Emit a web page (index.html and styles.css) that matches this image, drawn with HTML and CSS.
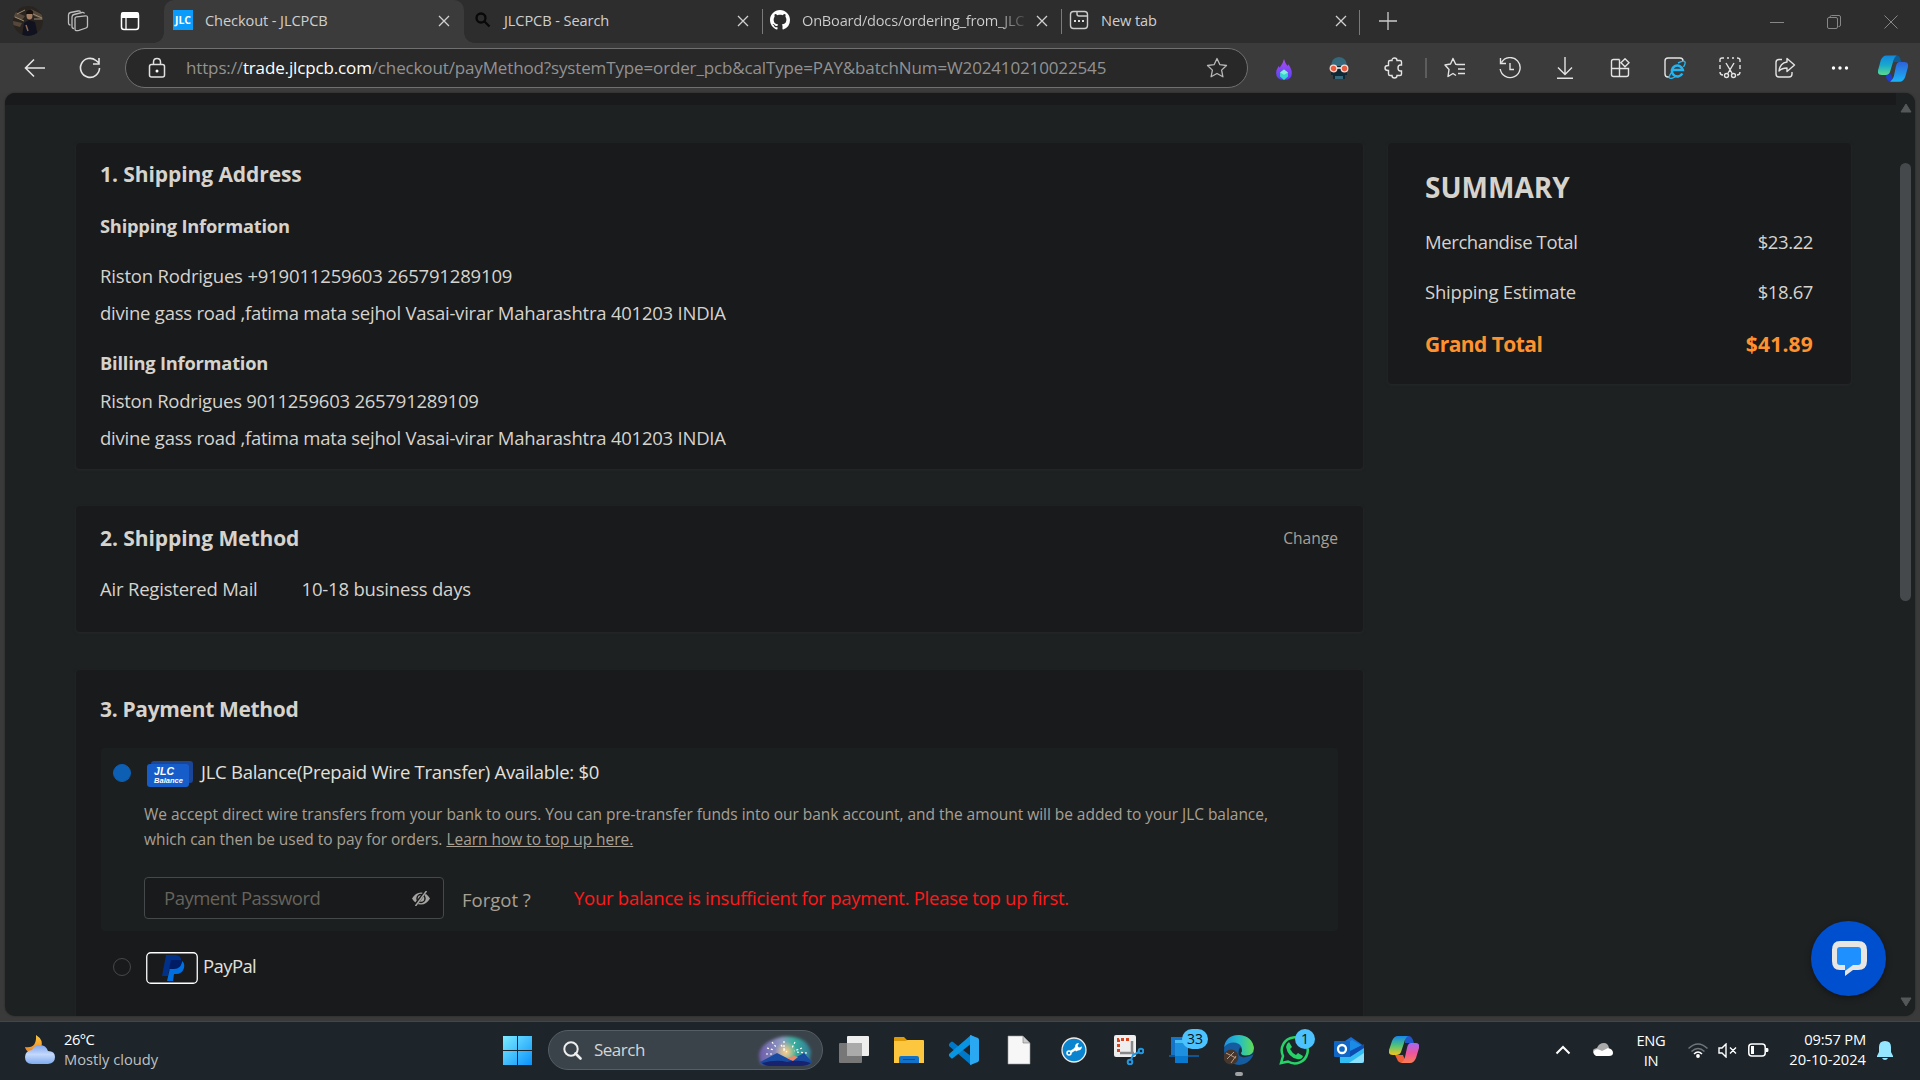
FILE: index.html
```html
<!DOCTYPE html>
<html lang="en">
<head>
<meta charset="utf-8">
<title>Checkout - JLCPCB</title>
<link rel="stylesheet" href="styles.css">
</head>
<body>
<div class="browser">
  <div class="tabbar">
    <div class="profile">
      <svg width="30" height="30" viewBox="0 0 30 30"><defs><clipPath id="av"><circle cx="15" cy="15" r="15"/></clipPath></defs><g clip-path="url(#av)"><path fill="#29241f" d="M0 0h30v30H0z"/><path fill="#55483a" d="M0 5l12 5-3 4-9-3zM18 3l12 6v5l-9-4zM0 15l9 2-2 4-7-2z"/><path stroke="#998974" stroke-width="1" d="M2 11l9 4M20 8l9 4M4 8l8-4M21 13h8"/><path fill="#10131f" d="M9 30l2-13 5-3 6 2 3 14z"/><ellipse cx="16.500" cy="9.500" rx="3" ry="4" fill="#a27c63"/><path fill="#17120f" d="M13 8q0-4 4-4t3 4z"/><path stroke="#8b674f" stroke-width="1.500" d="M13 19l2 6"/></g></svg>
    </div>
    <svg class="i workspaces" width="22" height="22" viewBox="0 0 22 22"><g fill="none" stroke="#bdbdbd" stroke-width="1.300" stroke-linejoin="round"><path d="M8 8.500q0-1.500 1.500-1.700l9-1q2-.2 2 1.700V16q0 1.500-1.500 2l-7 2.300Q8 21.500 8 19z"/><path d="M7 18.500q-2 0-2-2V7q0-2 2-2.500l8-2q2-.4 2.500 1"/><path d="M3.500 15q-2 0-2-2V5q0-2 2-2.500L11 1q2-.4 2.500.8"/></g></svg>
    <svg class="i vertical-tabs" width="20" height="20" viewBox="0 0 20 20"><rect x="1.500" y="2" width="17" height="16.500" rx="2.500" fill="none" stroke="#fff" stroke-width="1.500"/><path d="M1 2.500Q1 1 3 1h14q2 0 2 2v4H1z" fill="#fff"/><path d="M6 7v11" stroke="#fff" stroke-width="1.300"/></svg>
    <div class="tab active">
      <span class="jlc-favicon">JLC</span>
      <span class="tab-title">Checkout - JLCPCB</span>
      <svg class="close" viewBox="0 0 12 12"><path d="M1 1l10 10M11 1L1 11"/></svg>
    </div>
    <div class="tab">
      <svg class="favicon" viewBox="0 0 20 20"><g fill="none" stroke="#080808" stroke-width="2.300"><circle cx="8" cy="8" r="4.500"/><path d="M11.500 11.500l5 5"/></g></svg>
      <span class="tab-title t2">JLCPCB - Search</span>
      <svg class="close" viewBox="0 0 12 12"><path d="M1 1l10 10M11 1L1 11"/></svg>
    </div>
    <div class="tab sep github">
      <svg class="favicon" viewBox="0 0 16 16"><path fill="#fff" d="M8 0C3.580 0 0 3.580 0 8c0 3.540 2.290 6.530 5.470 7.590.4.070.55-.17.55-.38 0-.19-.01-.82-.01-1.490-2.010.37-2.530-.49-2.690-.94-.09-.23-.48-.94-.82-1.130-.28-.15-.68-.52-.01-.53.63-.01 1.080.58 1.230.82.720 1.210 1.870.87 2.330.66.070-.52.28-.87.51-1.070-1.780-.2-3.640-.89-3.640-3.950 0-.87.31-1.590.82-2.150-.08-.2-.36-1.020.08-2.120 0 0 .67-.21 2.200.82.640-.18 1.320-.27 2-.27s1.360.09 2 .27c1.530-1.040 2.200-.82 2.200-.82.440 1.100.16 1.920.08 2.120.51.560.82 1.270.82 2.150 0 3.070-1.870 3.750-3.650 3.950.29.250.54.730.54 1.480 0 1.070-.01 1.930-.01 2.200 0 .21.150.46.550.38A8.010 8.010 0 0 0 16 8c0-4.420-3.580-8-8-8z"/></svg>
      <span class="tab-title t3">OnBoard/docs/ordering_from_JLC</span>
      <svg class="close" viewBox="0 0 12 12"><path d="M1 1l10 10M11 1L1 11"/></svg>
    </div>
    <div class="tab sep">
      <svg class="favicon" viewBox="0 0 20 20"><g fill="none" stroke="#ccc" stroke-width="1.400"><rect x="1.500" y="1.500" width="17" height="17" rx="3"/><path d="M8 2v2q0 2 2 2h8.500"/></g><g fill="#ddd"><path d="M5 10h2v2H5zM9 10h2v2H9zM13 10h2v2h-2z"/></g></svg>
      <span class="tab-title">New tab</span>
      <svg class="close" viewBox="0 0 12 12"><path d="M1 1l10 10M11 1L1 11"/></svg>
    </div>
    <div class="newtab"><svg width="18" height="18" viewBox="0 0 18 18"><path d="M9 0v18M0 9h18" stroke="#ccc" stroke-width="1.300"/></svg></div>
    <div class="window-buttons">
      <svg viewBox="0 0 14 14"><path d="M0 7.500h14"/></svg>
      <svg viewBox="0 0 14 14"><rect x=".5" y="2.500" width="10" height="11" rx="1.500"/><path d="M3 2.500V2q0-1.500 1.500-1.500H12q1.500 0 1.500 1.500v8q0 1.500-1.500 1.500h-.5"/></svg>
      <svg viewBox="0 0 14 14"><path d="M.5.500l13 13M13.500.500l-13 13"/></svg>
    </div>
  </div>

  <div class="toolbar">
    <svg class="back" width="22" height="20" viewBox="0 0 22 20"><path d="M21 10H1.500M10 1.500L1.500 10l8.500 8.500" fill="none" stroke="#e4e4e4" stroke-width="1.600"/></svg>
    <svg class="refresh" width="22" height="22" viewBox="0 0 22 22"><path d="M20.500 11A9.500 9.500 0 1 1 17 3.500L20 6M20 1v6h-6" fill="none" stroke="#e4e4e4" stroke-width="1.600"/></svg>
    <div class="address">
      <svg width="18" height="22" viewBox="0 0 18 22"><g fill="none" stroke="#e0e0e0" stroke-width="1.500"><rect x="1.500" y="7.500" width="15" height="12.500" rx="2"/><path d="M5.500 7V5q0-3.500 3.500-3.500T12.500 5v2"/></g><circle cx="9" cy="14" r="1.500" fill="#fff"/></svg>
      <span class="url">https://<b>trade.jlcpcb.com</b>/checkout/payMethod?systemType=order_pcb&amp;calType=PAY&amp;batchNum=W202410210022545</span>
      <svg width="22" height="22" viewBox="0 0 22 22"><path d="M11 1.500l2.900 6.200 6.600.8-4.900 4.600 1.300 6.700-5.900-3.300-5.900 3.300 1.300-6.700L1.500 8.500l6.600-.8z" fill="none" stroke="#b8b8b8" stroke-width="1.300" stroke-linejoin="round"/></svg>
    </div>
    <div class="tools">
      <span><svg class="flame" width="16" height="21" viewBox="0 0 18 24"><defs><linearGradient id="fl" x2="0" y2="1"><stop stop-color="#b04bf5"/><stop offset="1" stop-color="#5443f5"/></linearGradient></defs><g stroke="none"><path fill="url(#fl)" d="M9 0q1 4 4 8l1-2q4 6 4 10 0 8-9 8t-9-8q0-4 3-8l1 2q4-5 5-10z"/><path fill="#35d6d0" d="M9 12l4.500 3.500v4.500L9 24l-4.500-4v-4.500z"/><path fill="#85efdd" d="M9 12l4.500 3.500L9 18l-4.500-2.500z"/></g></svg></span>
      <span><svg width="20" height="22" viewBox="0 0 20 22"><g stroke="none"><path fill="#34687a" d="M2 11Q2 0 10 0t8 11z"/><path fill="#102834" d="M2 9h16v9H2zM4 17h12v5H4z"/><path fill="#34687a" d="M6 19h8v3H6z"/></g><g fill="#eb5b3d" stroke="#f2dcd4" stroke-width="1.300"><circle cx="4.500" cy="11.500" r="3.300"/><circle cx="15.500" cy="11.500" r="3.300"/></g><path stroke="#fff" d="M8 11h4"/></svg></span>
      <span><svg width="22" height="22" viewBox="0 0 22 22"><path d="M7 3.500h2q0-2.500 2.500-2.500T14 3.500h3q1.500 0 1.500 1.500v3h-1q-2.500 0-2.500 3t2.500 3h1v3q0 1.500-1.500 1.500h-3Q14 21 11.500 21T9 18.500H7q-1.500 0-1.500-1.500v-3.500H5q-3 0-3-2.500t3-2.500h.5V5Q5.500 3.500 7 3.500z"/></svg></span>
      <i></i>
      <span><svg width="22" height="22" viewBox="0 0 22 22"><path d="M13 7.500h8M14 12h7M14 16.500h7M13.500 7.500l-1.800-.3L9 1.500 6.500 7 1 8l4 4.500L4 19.500l5-3 3 2" stroke-linejoin="round"/></svg></span>
      <span><svg width="22" height="22" viewBox="0 0 22 22"><path d="M2.500 5.500A10 10 0 1 1 1.200 12M1.500 1v5.500H7M11 6v6.500h4"/></svg></span>
      <span><svg width="18" height="22" viewBox="0 0 18 22"><path d="M9 0v17M2 10.500l7 7 7-7M1 21.200h16"/></svg></span>
      <span><svg width="20" height="20" viewBox="0 0 20 20"><path d="M9.500 1.500h-6q-2 0-2 2v13q0 2 2 2h13q2 0 2-2v-6H1.500M9.500 1.500v17M15 .800l4 4-4 4-4-4z"/></svg></span>
      <span><svg width="22" height="22" viewBox="0 0 22 22"><path d="M5 20H4q-3 0-3-3V4q0-3 3-3h12q3 0 3 3"/><path d="M18.300 16.500A5.500 5.500 0 1 1 18.800 13H9" stroke="#24b4ef" stroke-width="2.600"/><path d="M8 15q-5 6-1 6.500 3-.5 6-3M14 6q6-3 7-1 .7 1.500-1.500 5" stroke="#24b4ef" stroke-width="1.400"/></svg></span>
      <span><svg width="22" height="22" viewBox="0 0 22 22"><path d="M1 5V3q0-2 2-2h2m3 0h2m3 0h2m3 0q3 0 3 2v2M1 8v4m20-4v4M1 15q0 3 3 3m17-3q0 3-3 3M7 6l6.500 11M15 6L8.500 17"/><circle cx="7.500" cy="18.500" r="2"/><circle cx="14.500" cy="18.500" r="2"/></svg></span>
      <span><svg width="22" height="22" viewBox="0 0 22 22"><path d="M8 2.500H5q-3 0-3 3V17q0 3 3 3h10q3 0 3-3v-2M13 1.500L20.500 8 13 14.500V11q-5 0-8 3 1-8 8-9z" stroke-linejoin="round"/></svg></span>
      <span><svg width="18" height="6" viewBox="0 0 18 6"><g fill="#fff" stroke="none"><circle cx="2.500" cy="3" r="1.700"/><circle cx="9" cy="3" r="1.700"/><circle cx="15.500" cy="3" r="1.700"/></g></svg></span>
      <span class="side"><svg width="30" height="27" viewBox="0 0 32 28"><defs><linearGradient id="ca" x2="0" y2="1"><stop stop-color="#1287df"/><stop offset=".5" stop-color="#18a9cc"/><stop offset="1" stop-color="#5bdc8c"/></linearGradient><linearGradient id="cb" x2="0" y2="1"><stop stop-color="#2e62d9"/><stop offset="1" stop-color="#19b4f5"/></linearGradient></defs><g stroke="none"><path fill="#0d5b91" d="M16 0h4q3 0 4 4l1 3h-8z"/><path fill="#1e3fd0" d="M8 20l6 0 3 8h-3q-4 0-5-4z"/><path fill="url(#ca)" d="M9 0h11q-3 2-4 7l-3 10q-1 4-5 4H4q-5 0-4-5L3 5q2-5 6-5z"/><path fill="url(#cb)" d="M23 7h5q5 0 4 5l-3 11q-2 5-6 5H13q3-2 4-6l2-10q1-5 4-5z"/></g></svg></span>
    </div>
  </div>

  <div class="viewport">
    <main class="page">
      <div class="main">
        <section class="card address-card">
          <h2>1. Shipping Address</h2>
          <h3>Shipping Information</h3>
          <p class="contact">Riston Rodrigues +919011259603 265791289109</p>
          <p>divine gass road ,fatima mata sejhol Vasai-virar Maharashtra 401203 INDIA</p>
          <h3 class="billing">Billing Information</h3>
          <p>Riston Rodrigues 9011259603 265791289109</p>
          <p>divine gass road ,fatima mata sejhol Vasai-virar Maharashtra 401203 INDIA</p>
        </section>
        <section class="card method-card">
          <div class="head"><h2>2. Shipping Method</h2><a>Change</a></div>
          <div class="method"><span>Air Registered Mail</span><span>10-18 business days</span></div>
        </section>
        <section class="card pay-card">
          <h2>3. Payment Method</h2>
          <div class="balance">
            <div class="option">
              <span class="radio on"></span>
              <svg width="46" height="26" viewBox="0 0 46 26"><rect x="4" y="0" width="42" height="22" rx="3" fill="#1b4597"/><rect x="0" y="3" width="42" height="23" rx="3" fill="#175dca"/><g fill="#fff" font-family="Liberation Sans, sans-serif" font-weight="700" font-style="italic"><text x="7" y="13.500" font-size="10.500" textLength="20">JLC</text><text x="7" y="22" font-size="7.500" textLength="29">Balance</text></g></svg>
              <span class="name balance-name">JLC Balance(Prepaid Wire Transfer) Available: $0</span>
            </div>
            <p class="desc">We accept direct wire transfers from your bank to ours. You can pre-transfer funds into our bank account, and the amount will be added to your JLC balance,<br>which can then be used to pay for orders. <u>Learn how to top up here.</u></p>
            <div class="password-row">
              <div class="password"><span>Payment Password</span><svg width="18" height="15" viewBox="0 0 18 15"><path fill="#a5a39f" d="M0 7.500Q3.500 1.500 9 1.500t9 6q-3.500 6-9 6t-9-6z"/><circle cx="9" cy="7.500" r="4" fill="none" stroke="#181a1b" stroke-width="1.500"/><path d="M2.500 15L14 0" stroke="#181a1b" stroke-width="3"/><path d="M3.500 15L14.500 0" stroke="#a5a39f" stroke-width="1.500"/></svg></div>
              <span class="forgot">Forgot ?</span>
              <span class="error">Your balance is insufficient for payment. Please top up first.</span>
            </div>
          </div>
          <div class="option paypal">
            <span class="radio"></span>
            <svg width="52" height="32" viewBox="0 0 52 32"><rect x=".75" y=".75" width="50.500" height="30.500" rx="4" fill="none" stroke="#fff" stroke-width="1.300"/><path fill="#003087" d="M20 3h9q7 0 6 7-1 8-9 8h-3l-1 6h-6z"/><path fill="#0070e0" d="M36 9q3 2 2 7-2 6-8 6h-2l-1 7h-6l3-13h5q6 0 7-7z"/><path fill="#001c64" d="M25 8h9l2 1q-1 8-8 8h-5z"/></svg>
            <span class="name paypal-name">PayPal</span>
          </div>
        </section>
      </div>
      <aside class="summary">
        <h1>SUMMARY</h1>
        <div class="line"><span>Merchandise Total</span><span>$23.22</span></div>
        <div class="line"><span class="estimate">Shipping Estimate</span><span>$18.67</span></div>
        <div class="line grand"><span>Grand Total</span><span class="sum">$41.89</span></div>
      </aside>
    </main>
    <div class="scrollbar">
      <svg width="12" height="10" viewBox="0 0 12 10"><path d="M6 1l5 8H1z" fill="#555859" stroke="#555859" stroke-linejoin="round"/></svg>
      <div class="thumb"></div>
      <svg width="12" height="10" viewBox="0 0 12 10"><path d="M6 9l5-8H1z" fill="#555859" stroke="#555859" stroke-linejoin="round"/></svg>
    </div>
    <div class="chat"><svg width="36" height="36" viewBox="0 0 36 36"><path fill="#e8e6e3" d="M9 0h18q9 0 9 9v11q0 9-9 9h-5l-8 6v-6H9q-8 0-8-9V9q0-9 8-9z"/><path fill="#1e90ff" d="M9 6h18q3 0 3 3v12q0 3-3 3h-5l-8 6v-6H9q-3 0-3-3V9q0-3 3-3z"/></svg></div>
  </div>
</div>

<footer class="taskbar">
  <div class="weather">
    <svg width="30" height="30" viewBox="0 0 30 30"><defs><linearGradient id="cl" x2="0" y2="1"><stop stop-color="#7fa5ee"/><stop offset=".5" stop-color="#c3d8fb"/><stop offset="1" stop-color="#7fabf0"/></linearGradient><linearGradient id="mo" x2="0" y2="1"><stop stop-color="#ffc93d"/><stop offset="1" stop-color="#ea7f26"/></linearGradient></defs><path fill="url(#mo)" d="M11 0q8 5 5 12-3 8-11 6-4-2-5-6 12 2 11-12z"/><path fill="url(#cl)" d="M7 15q2-5 8-5 6 0 8 6 7 0 7 6t-7 7H7q-7 0-7-7 0-6 7-7z"/></svg>
    <div><span class="temp">26°C</span><span class="sky">Mostly cloudy</span></div>
  </div>
  <svg class="start" width="29" height="29" viewBox="0 0 29 29"><defs><linearGradient id="wi" x2="1" y2="1"><stop stop-color="#7cecff"/><stop offset="1" stop-color="#0a92fb"/></linearGradient></defs><path fill="url(#wi)" d="M0 0h14v14H0zM15 0h14v14H15zM0 15h14v14H0zM15 15h14v14H15z"/></svg>
  <div class="search">
    <svg width="19" height="19" viewBox="0 0 19 19"><circle cx="8" cy="8" r="6.700" fill="none" stroke="#eee" stroke-width="2"/><path d="M12.500 12.500l5 5" stroke="#eee" stroke-width="2.600" stroke-linecap="round"/></svg>
    <span>Search</span>
    <svg width="60" height="32" viewBox="0 0 60 32"><defs><linearGradient id="sk"><stop stop-color="#6d5cab"/><stop offset=".45" stop-color="#8e9cc0"/><stop offset=".65" stop-color="#35b29d"/><stop offset="1" stop-color="#337a96"/></linearGradient><radialGradient id="gl"><stop stop-color="#ffcf85"/><stop offset="1" stop-color="#ffcf8500"/></radialGradient><filter id="bl" x="-20%" y="-20%" width="140%" height="140%"><feGaussianBlur stdDeviation="1.800"/></filter></defs><path fill="url(#sk)" filter="url(#bl)" d="M6 30Q0 16 13 8q13-7 25-5 15 2 18 15l-2 12z"/><circle cx="31" cy="18" r="11" fill="url(#gl)"/><path stroke="#fff" stroke-width="1.200" stroke-dasharray="2 2" d="M17 8l4 5M12 14l7 2M11 20h8M29 7v10M26 11l6 7M40 8l-3 6M47 14l-8 3M52 19l-11-1"/><path fill="#194ba0" d="M5 28l17-9 14 7 13-7 8 9q-4 4-9 4H14q-6 0-9-4z"/><path fill="#f58465" d="M32 24l6 3 5-4-4-1z"/><path fill="#17236e" d="M7 29q15-4 25-1 12-3 24 1-4 3-9 3H15q-5 0-8-3z"/></svg>
  </div>
  <div class="apps">
    <span><svg viewBox="0 0 30 30"><rect x="8" y="1" width="22" height="20" rx="1" fill="#eee"/><rect x="0" y="8" width="23" height="20" rx="1" fill="#777"/><path fill="#aaa" d="M8 8h15v13H8z"/></svg></span>
    <span><svg viewBox="0 0 30 30"><path fill="#dc9a08" d="M0 3q0-1 1-1h9l3 3h15v6H0z"/><path fill="#fcc73e" d="M0 6h11l3-1h15q1 0 1 1v22H0z"/><path fill="#1272ca" d="M5 28v-5q0-2 2-2h16q2 0 2 2v5z"/><path fill="#0b4a8e" d="M9 24h12v1H9z"/></svg></span>
    <span><svg viewBox="0 0 30 30"><path fill="#0078c8" d="M22 30L0 11q-1-1 0-2l2-2q1-1 2 0l24 19z"/><path fill="#0894e0" d="M22 0L0 19q-1 1 0 2l2 2q1 1 2 0L28 4z"/><path fill="#2aa9f2" d="M21 0l8 3q1 1 1 2v20q0 1-1 2l-8 3V8z"/></svg></span>
    <span><svg viewBox="0 0 30 30"><path fill="#f7f7f7" stroke="#999" stroke-width=".6" d="M4 1h15l7 7v21H4z"/><path fill="#ccc" stroke="#777" stroke-width=".6" d="M19 1v7h7z"/></svg></span>
    <span><svg viewBox="0 0 30 30"><circle cx="15" cy="15" r="12" fill="#0b84d0" stroke="#f1ece6" stroke-width="1.300"/><path fill="none" stroke="#fff" stroke-width="2.600" d="M11 17.500l6-4"/><circle cx="10" cy="18" r="2" fill="#0b84d0" stroke="#fff" stroke-width="1.500"/><path fill="#fff" d="M16 12q0-4 4-4l-1.500 3 1.500 1.500 3-1q-.5 4-4 4l-2 1-2-3z"/></svg></span>
    <span><svg viewBox="0 0 30 30"><rect width="22" height="22" rx="2" fill="#eee"/><path fill="none" stroke="#d8431d" stroke-width="3" stroke-dasharray="3 2" d="M4.500 17V4.500H16"/><path fill="none" stroke="#888" stroke-width="2.500" d="M18 6v13M6 18h14"/><g fill="none" stroke="#2397df" stroke-width="2"><circle cx="27" cy="16" r="2.300"/><circle cx="16" cy="27" r="2.300"/><path d="M17 25l2-5 6-3"/></g></svg></span>
    <span><svg viewBox="0 0 30 30"><path fill="#1474c8" d="M2 2h14v19H2z"/><path fill="#0d5593" d="M0 20h30v2H0z"/><path fill="#1d91e0" d="M6 5h13v23H6z"/><path fill="#46bdf4" d="M6 5h13v3H6z"/><path fill="#0879ce" d="M6 21h13v7H6z"/></svg><em class="wide">33</em></span>
    <span class="current"><svg viewBox="0 0 30 30"><defs><linearGradient id="ed"><stop stop-color="#218fe3"/><stop offset=".5" stop-color="#25bec7"/><stop offset="1" stop-color="#62dc51"/></linearGradient></defs><circle cx="15" cy="15" r="15" fill="#155b9f"/><path fill="url(#ed)" d="M0 12Q2 0 15 0q13 1 15 13-1 8-9 8-4 0-4-3 3-5-2-9Q7 5 0 12z"/><path fill="#1c2c38" d="M16 12q-4 9 2 10 6 1 12-3v-2q-3 4-9 3.500-4-.5-4-2.500 2-3-1-6z"/><circle cx="7" cy="22" r="7.500" fill="#47362c"/><path d="M2 18l10 5M3 24l7-7M7 28l5-7" stroke="#bd9a82"/></svg></span>
    <span><svg viewBox="0 0 30 30"><path fill="none" stroke="#25d366" stroke-width="2.500" d="M2 28l2-7A13 13 0 1 1 9 26.500z"/><path fill="#25d366" d="M10 7l3 5-2 2q2 4 6 6l2-2 5 3q-1 4-6 3-9-2-11-12 0-3 3-5z"/></svg><em>1</em></span>
    <span><svg viewBox="0 0 30 30"><path fill="#1b6dd0" d="M5 10l12-8 13 9v17H6z"/><path fill="#1a8ce6" d="M11 10l7-5 10 6v5H11z"/><path fill="#0d4db2" d="M16 16l14-7v5l-14 9z"/><path fill="#32bdf2" d="M30 13v12q0 3-3 3H6v-6h10z"/><path fill="#8ae0fb" d="M15 28l15-10v7q0 3-3 3z"/><rect y="6" width="16" height="16" rx="1" fill="#1066c4"/><circle cx="8" cy="14" r="4" fill="none" stroke="#fff" stroke-width="2.300"/></svg></span>
    <span><svg viewBox="0 0 30 30"><defs><linearGradient id="c1" x2="0" y2="1"><stop stop-color="#1587e9"/><stop offset=".5" stop-color="#4fc37a"/><stop offset="1" stop-color="#f4c71b"/></linearGradient><linearGradient id="c2" x2="0" y2="1"><stop stop-color="#a368f5"/><stop offset=".5" stop-color="#ec559e"/><stop offset="1" stop-color="#fb7c50"/></linearGradient></defs><path fill="#1f56ca" d="M16 1h4q3 0 5 7h-9z"/><path fill="#f06038" d="M6 20h8l3 8h-3q-5 0-6-4z"/><path fill="url(#c1)" d="M9 1h10q-3 2-4 7l-3 9q-1 3-5 3H4q-5 0-4-5L3 6q2-5 6-5z"/><path fill="url(#c2)" d="M22 8h5q4 0 3 5l-3 10q-2 5-6 5h-9q3-2 4-6l2-9q1-5 4-5z"/></svg></span>
  </div>
  <div class="tray">
    <svg width="16" height="10" viewBox="0 0 16 10"><path d="M1.500 8.500L8 2l6.500 6.500" fill="none" stroke="#fff" stroke-width="2"/></svg>
    <svg class="onedrive" width="20" height="14" viewBox="0 0 20 14"><path fill="#aaa" d="M4 5q2-5 7-5 4 0 5 5l-6 5H1q-3-4 3-5z"/><path fill="#fff" d="M3 13q-4-3-2-5 2-3 6-1l2 1 6-3q5 1 5 5 0 3-4 3z"/></svg>
    <div class="lang">ENG<br>IN</div>
    <svg class="wifi" width="20" height="15" viewBox="0 0 20 15"><g fill="none" stroke-width="1.500"><path stroke="#70767a" d="M.5 5.500q9.500-9 19 0M3.500 8.500q6.500-6 13 0"/><path stroke="#fff" d="M6 11q4-4 8 0"/></g><circle cx="10" cy="13" r="1.900" fill="#fff"/></svg>
    <svg class="volume" width="20" height="15" viewBox="0 0 20 15"><path fill="none" stroke="#fff" stroke-width="1.400" d="M1 5h3l4-4v13l-4-4H1zM12 4.500l6 6M18 4.500l-6 6"/></svg>
    <svg class="battery" width="21" height="14" viewBox="0 0 21 14"><rect x=".8" y="1" width="16.400" height="12" rx="3" fill="none" stroke="#fff" stroke-width="1.500"/><path fill="#fff" d="M3 3h3v8H3zM18 5h1.500q1 0 1 2t-1 2H18z"/></svg>
    <div class="clock">09:57 PM<br><span>20-10-2024</span></div>
    <svg class="bell" width="16" height="19" viewBox="0 0 16 19"><path fill="#94e7ff" d="M8 0q6 0 6 6v5l2 4v1H0v-1l2-4V6q0-6 6-6zM5 17h6q-1 2-3 2t-3-2z"/></svg>
  </div>
</footer>
</body>
</html>
```
FILE: styles.css
```css
* { box-sizing: border-box; margin: 0; padding: 0; }
body { width: 1920px; height: 1080px; overflow: hidden; background: #3b3a3a; font-family: "Open Sans", "Noto Sans", sans-serif; color: #d6d3cd; }
svg { display: block; flex: none; }
span, a, p { white-space: nowrap; }

.browser { height: 1021px; display: flex; flex-direction: column; }

.tabbar { height: 43px; flex: none; display: flex; align-items: center; background: #2d2d2d; }
.profile { width: 30px; margin-left: 13px; margin-top: -2px; }
.workspaces { margin-left: 24px; margin-top: -1px; }
.vertical-tabs { margin-left: 31px; margin-top: -1px; }
.tabbar .tab { width: 299px; height: 43px; display: flex; align-items: center; padding: 0 14px 3px 9px; position: relative; }
.tabbar .tab.active { width: 300px; margin-left: 24px; border-radius: 10px 10px 0 0; background: #3b3b3b; }
.tab.active::before, .tab.active::after { content: ""; position: absolute; bottom: 0; width: 10px; height: 10px; }
.tab.active::before { left: -10px; background: radial-gradient(circle at 0 0, transparent 9.500px, #3b3b3b 10px); }
.tab.active::after { right: -10px; background: radial-gradient(circle at 100% 0, transparent 9.500px, #3b3b3b 10px); }
.tab.sep::before { content: ""; position: absolute; left: -1px; top: 9px; width: 1px; height: 25px; background: #7a7a7a; }
.tabbar .tab.sep { padding-left: 7px; }
.jlc-favicon { width: 20px; height: 20px; background: #0b9bfb; color: #fff; font: 700 10.500px/20px "Open Sans", sans-serif; text-align: center; overflow: hidden; }
.favicon { width: 20px; height: 20px; }
.tab-title { font-size: 14.600px; line-height: 22px; margin-left: 12px; flex: 1; color: #cfcfcf; letter-spacing: -.1px; }
.t2 { margin-left: 11px; }
.t3 { color: transparent; background: linear-gradient(90deg, #cfcfcf 194px, #2d2d2d 228px); -webkit-background-clip: text; background-clip: text; letter-spacing: -.22px; }
.close { width: 12px; height: 12px; fill: none; stroke: #d0d0d0; stroke-width: 1.300; margin-left: 11px; margin-top: 2px; }
.newtab { width: 54px; height: 18px; display: flex; justify-content: center; margin-top: -2px; position: relative; }
.newtab::before { content: ""; position: absolute; left: -2px; top: -2px; width: 1px; height: 25px; background: #7a7a7a; }
.newtab svg { margin-left: 0; }
.window-buttons { margin-left: auto; margin-right: 22px; display: flex; gap: 43px; }
.window-buttons svg { width: 14px; height: 14px; fill: none; stroke: #878787; }

.toolbar { height: 50px; flex: none; display: flex; align-items: center; background: #3b3b3b; }
.back { margin-left: 24px; }
.refresh { margin-left: 33px; }
.address { width: 1123px; height: 40px; margin-left: 24px; padding: 0 19px 0 22px; border: 1px solid #707070; border-radius: 20px; background: #282828; display: flex; align-items: center; }
.url { flex: 1; margin-left: 20px; font-size: 17px; line-height: 24px; letter-spacing: -.14px; color: #929292; }
.url b { color: #fff; font-weight: 400; }
.tools { margin-left: 8px; display: flex; align-items: center; }
.tools span { width: 55px; display: flex; justify-content: center; }
.tools i { width: 6px; height: 20px; border-right: 2px solid #5d5d5d; }
.tools .side { width: 51px; margin-top: 1px; }
.tools svg { fill: none; stroke: #e3e3e3; stroke-width: 1.400; }
.tools .flame { margin-top: 2px; }

.viewport { position: relative; height: 923px; margin: 0 5px; border-radius: 10px; background: #1e2122; overflow: hidden; display: flex; box-shadow: 0 0 2px #222; }
.page { flex: 1; display: flex; align-items: flex-start; gap: 25px; padding: 38px 0 0 71px; border-top: 12px solid #191a1b; height: 923px; overflow: hidden; }
.main { width: 1287px; display: flex; flex-direction: column; gap: 37px; }
.card, .summary { background: #191a1c; border-radius: 4px; box-shadow: 0 1px 3px #26282a; }
.card { padding: 0 25px 0 24px; }
h2 { font-size: 21px; line-height: 32px; letter-spacing: -.08px; }
h3 { font-size: 18.300px; line-height: 30px; letter-spacing: -.22px; }
.card p { font-size: 18.500px; line-height: 37px; letter-spacing: -.23px; }
.card .contact { letter-spacing: -.17px; }
.address-card { height: 326px; padding-top: 15px; }
.address-card h3 { margin: 21px 0 16px; }
.address-card h3.billing { margin: 17px 0 4px; }
.method-card { height: 126px; padding-top: 16px; }
.pay-card { margin-top: 1px; }
.head { display: flex; justify-content: space-between; align-items: center; }
.head a { font-size: 15.600px; color: #a8a095; margin-top: -1px; }
.method { display: flex; gap: 44px; margin-top: 17px; font-size: 18.500px; line-height: 36px; letter-spacing: -.2px; }
.pay-card { height: 360px; padding-top: 23px; }
.pay-card h2 { letter-spacing: -.33px; margin-bottom: 23px; }
.balance { height: 183px; margin-left: 1px; border-radius: 4px; background: #1c1f20; padding: 13px 12px 0; }
.option { display: flex; align-items: center; height: 26px; }
.radio { width: 18px; height: 18px; border: 1px solid #45494b; border-radius: 50%; margin-right: 16px; }
.radio.on { background: #0d5fb4; border-color: #0d5fb4; margin-top: -2px; }
.name { font-size: 18.500px; line-height: 26px; letter-spacing: -.27px; color: #e3e0dc; }
.balance-name { margin-left: 8px; margin-top: -5px; }
.paypal-name { margin-left: 5px; letter-spacing: -.6px; margin-top: -4px; }
.paypal .radio { margin-right: 15px; margin-top: -2px; }
.card .desc { font-size: 15.500px; line-height: 25px; letter-spacing: -.035px; color: #a8a095; margin: 15px 0 0 31px; }
.password-row { display: flex; align-items: center; margin: 25px 0 0 31px; font-size: 18.500px; }
.password { width: 300px; height: 42px; border: 1px solid #45494b; border-radius: 4px; background: #181a1b; padding: 0 13px 0 19px; display: flex; align-items: center; justify-content: space-between; color: #67635c; letter-spacing: -.5px; }
.password span { margin-top: -2px; }
.forgot { margin: 3px 0 0 18px; width: 112px; color: #a8a095; letter-spacing: 0; }
.error { color: #ff1a1a; letter-spacing: -.27px; margin-top: -2px; }
.paypal { margin: 24px 0 0 13px; }

.summary { width: 463px; height: 241px; padding: 23px 38px 0 37px; }
.summary h1 { font-size: 28px; line-height: 42px; }
.line { display: flex; justify-content: space-between; font-size: 18.500px; line-height: 36px; letter-spacing: -.4px; margin-bottom: 14px; }
.estimate { letter-spacing: -.2px; }
.summary h1 + .line { margin-top: 16px; }
.grand { color: #ff922e; font-size: 21px; font-weight: 700; letter-spacing: -.55px; margin-top: 16px; }
.grand .sum { letter-spacing: .2px; }

.scrollbar { width: 19px; display: flex; flex-direction: column; align-items: center; padding: 10px 0 9px; background: #1e2122; }
.thumb { width: 11px; height: 438px; border-radius: 6px; background: #46494b; margin: 50px 0 auto; }
.chat { position: absolute; left: 1806px; top: 828px; width: 75px; height: 75px; border-radius: 50%; background: #004fce; display: flex; align-items: center; justify-content: center; box-shadow: 0 2px 6px #0006; }

.taskbar { height: 59px; padding-bottom: 2px; border-top: 1px solid #434647; display: flex; align-items: center; background: #1d242a; font-size: 14.700px; line-height: 20px; }
.weather { width: 478px; margin-left: 25px; display: flex; gap: 9px; align-items: center; }
.weather div { display: flex; flex-direction: column; margin-top: -2px; }
.temp { color: #fff; letter-spacing: -.5px; }
.sky { color: #bfc1c3; }
.search { width: 275px; height: 40px; margin-left: 16px; border-radius: 20px; border: 1px solid #555d65; background: #3b434a; display: flex; align-items: center; padding: 0 7px 0 14px; }
.search span { flex: 1; margin-left: 12px; font-size: 17px; letter-spacing: -.5px; color: #d3d5d7; }
.apps { display: flex; margin-left: 3px; }
.apps span { position: relative; width: 55px; height: 56px; display: flex; align-items: center; justify-content: center; }
.apps svg { width: 30px; height: 30px; }
.apps em { position: absolute; left: 29px; top: 7px; width: 20px; height: 20px; border-radius: 10px; background: #4cc2ff; color: #111; font-style: normal; font-size: 14px; text-align: center; }
.apps em.wide { left: 26px; width: 26px; }
.current::after { content: ""; position: absolute; bottom: 2px; left: 24px; width: 8px; height: 4px; border-radius: 2px; background: #a0a2a4; }
.tray { display: flex; align-items: center; margin-left: auto; margin-right: 27px; color: #fff; }
.onedrive { margin-left: 22px; }
.lang { width: 40px; margin-left: 18px; margin-top: -1px; text-align: center; letter-spacing: -.3px; }
.wifi { margin-left: 17px; }
.volume { margin-left: 10px; }
.battery { margin-left: 10px; }
.clock { width: 80px; margin-left: 17px; margin-top: -2px; text-align: right; letter-spacing: -.2px; }
.clock span { letter-spacing: 0; }
.bell { margin-left: 11px; }
```
